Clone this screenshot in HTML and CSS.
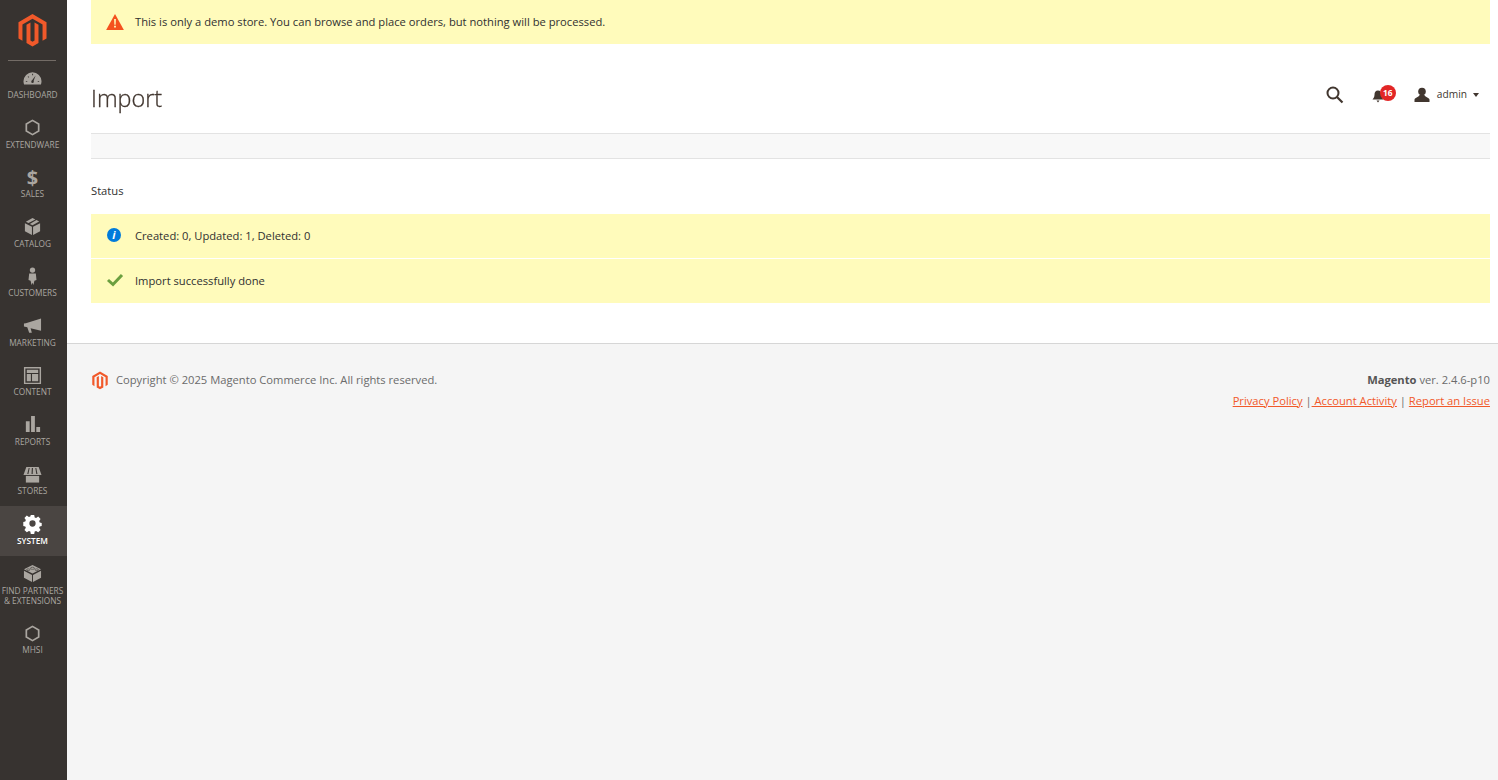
FILE: index.html
```html
<!DOCTYPE html>
<html lang="en">
<head>
<meta charset="utf-8">
<title>Import</title>
<link rel="stylesheet" href="styles.css">
</head>
<body>
<div class="app">
  <aside class="sidebar">
    <div class="logo-wrap">
      <svg class="logo" viewBox="0 0 30 34"><path class="brand" d="M15 0 29.500 8.400V25.200L25.400 27.600V10.800L15 4.800 4.600 10.800V27.600L.5 25.200V8.400Z"/><path class="brand" d="M12.900 8.600V27.400L15 28.600 17.100 27.400V8.600L21.200 11V29.900L15 33.500 8.800 29.900V11Z"/></svg>
    </div>
    <nav class="nav">
      <a class="nav-item">
        <svg class="nav-icon" viewBox="0 0 20 20"><path d="M10 3.500a9.500 9.500 0 0 0-9.500 9.500c0 1.100.2 2.200.6 3.200h17.800c.4-1 .6-2.100.6-3.200a9.500 9.500 0 0 0-9.500-9.500Z"/><path class="cut" d="M10.800 13.500 13.300 6.800 9 12.500Z"/><circle class="cut" cx="10" cy="13.500" r="1.300"/><path class="cut" d="M3 12.500h1.500v1H3ZM15.500 12.500H17v1h-1.500ZM5.500 7.500l1 1-.6.6-1-1ZM9.600 5h1V6.500h-1Z"/></svg>
        <span>Dashboard</span>
      </a>
      <a class="nav-item">
        <svg class="nav-icon" viewBox="0 0 20 20"><path class="hex" d="M10 2.500 16.500 6.300V13.700L10 17.500 3.500 13.700V6.300Z"/></svg>
        <span>Extendware</span>
      </a>
      <a class="nav-item">
        <svg class="nav-icon" viewBox="0 0 20 20"><text class="dollar" x="10" y="17.500" text-anchor="middle">$</text></svg>
        <span>Sales</span>
      </a>
      <a class="nav-item">
        <svg class="nav-icon" viewBox="0 0 20 20"><path d="M2 6.500 9.400 10.300V19L2 15ZM18 6.500 10.600 10.300V19L18 15ZM10 1 13 2.500 5.800 6.300 3 4.900ZM14.200 3.200 17 4.800 10 8.800 7.200 7.300Z"/></svg>
        <span>Catalog</span>
      </a>
      <a class="nav-item">
        <svg class="nav-icon" viewBox="0 0 20 20"><circle cx="10" cy="3.200" r="2.800"/><path d="M6.500 6.800h7l.7 7-2.200.7-1 4.500-1-2.500-1 2.500-1-4.500-2.200-.7Z"/></svg>
        <span>Customers</span>
      </a>
      <a class="nav-item">
        <svg class="nav-icon" viewBox="0 0 20 20"><path d="M19 2.500v13L8 12.800 9.300 17.500H6.500L4.500 11.800 1 11V8l2-.5Z"/></svg>
        <span>Marketing</span>
      </a>
      <a class="nav-item">
        <svg class="nav-icon" viewBox="0 0 20 20"><path fill-rule="evenodd" d="M1 1h18v18H1ZM2.500 2.500v15h15v-15Z"/><path d="M4 4h12v3.300H4ZM4 8.500h4.300V16H4ZM9.500 8.500H16V16H9.500Z"/></svg>
        <span>Content</span>
      </a>
      <a class="nav-item">
        <svg class="nav-icon" viewBox="0 0 20 20"><path d="M3 6.500h4V18H3ZM8.500 1h4V18h-4ZM14 12.500h4V18h-4Z"/></svg>
        <span>Reports</span>
      </a>
      <a class="nav-item">
        <svg class="nav-icon" viewBox="0 0 20 20"><path fill-rule="evenodd" d="M3.500 2h13L19.500 10.500H.5ZM6 3.200 4.500 9.500h1.200L7 3.200ZM9.300 3.200 9 9.500h1.200L10.500 3.200ZM13 3.200l1 6.300h1.200L14 3.200Z"/><path d="M3 11.500h14V18.500H3Z"/></svg>
        <span>Stores</span>
      </a>
      <a class="nav-item active">
        <svg class="nav-icon" viewBox="0 0 20 20"><path fill-rule="evenodd" d="M8.200 1h3.600l.5 2.600 1.500.6 2.200-1.500 2.500 2.500-1.500 2.200.6 1.500 2.100.5v3.200l-2.100.5-.6 1.500 1.500 2.200-2.500 2.500-2.200-1.500-1.500.6-.5 2.600H8.200l-.5-2.600-1.500-.6-2.200 1.500-2.500-2.500 1.500-2.200-.6-1.500-2.100-.5V8.400l2.100-.5.6-1.500L1.500 4.200 4 1.700l2.200 1.500 1.500-.6ZM10 6.700a3.300 3.300 0 1 0 0 6.600 3.300 3.300 0 0 0 0-6.600Z"/></svg>
        <span>System</span>
      </a>
      <a class="nav-item tall">
        <svg class="nav-icon" viewBox="0 0 20 20"><path d="M10 1 19 5.500 10 10 1 5.500ZM1 7 9.500 11.500V19L1 14.500ZM19 7 10.500 11.500V19L19 14.500Z"/><ellipse class="cut-line" cx="10" cy="4.500" rx="2.200" ry="1.100"/><ellipse class="cut-line" cx="5.600" cy="6" rx="1.800" ry=".9"/><ellipse class="cut-line" cx="14.400" cy="6" rx="1.800" ry=".9"/></svg>
        <span>Find Partners<br>&amp; Extensions</span>
      </a>
      <a class="nav-item">
        <svg class="nav-icon" viewBox="0 0 20 20"><path class="hex" d="M10 2.500 16.500 6.300V13.700L10 17.500 3.500 13.700V6.300Z"/></svg>
        <span>MHSI</span>
      </a>
    </nav>
  </aside>
  <div class="page">
    <main class="main">
      <div class="notice demo">
        <svg class="msg-icon" viewBox="0 0 20 18"><path class="brand-warn" d="M10 0 20 18H0Z"/><path fill="#fffbbb" d="M9 5.500h2L10.700 12H9.300ZM9 13.200h2V15.200H9Z"/></svg>
        <span>This is only a demo store. You can browse and place orders, but nothing will be processed.</span>
      </div>
      <header class="page-head">
        <h1>Import</h1>
        <div class="tools">
          <svg class="search" viewBox="0 0 18 18"><circle cx="7" cy="7" r="5.500" fill="none" stroke="#41362f" stroke-width="2"/><path d="M11 11l5.500 5.500" stroke="#41362f" stroke-width="2.200" fill="none"/></svg>
          <div class="bell">
            <svg viewBox="0 0 14 14"><path fill="#41362f" d="M7 1.500c-2.500 0-3.500 1.800-3.500 4.300 0 2.500-1 3.500-2 4.700h11c-1-1.200-2-2.200-2-4.700C10.500 3.300 9.500 1.500 7 1.500ZM5.500 11.500h3L7 13.500Z"/></svg>
            <span class="badge">16</span>
          </div>
          <div class="user">
            <svg viewBox="0 0 16 16"><circle cx="8" cy="4.500" r="3.800" fill="#41362f"/><path fill="#41362f" d="M5.500 8c-.3 2-4.500 2.500-5 4.500V15h15v-2.500C15 10.500 10.800 10 10.500 8Z"/></svg>
            <span class="user-name">admin</span>
            <span class="caret"></span>
          </div>
        </div>
      </header>
      <div class="actions-bar"></div>
      <div class="status">Status</div>
      <div class="messages">
        <div class="notice">
          <svg class="msg-icon" viewBox="1 0 16 16"><circle cx="8" cy="8" r="7" fill="#007bdb"/><text class="info-i" x="8" y="12" text-anchor="middle">i</text></svg>
          <span>Created: 0, Updated: 1, Deleted: 0</span>
        </div>
        <div class="notice">
          <svg class="msg-icon" viewBox="0 0 18 14"><path fill="none" stroke="#6b9f3f" stroke-width="3" d="M2 7l5 4.500L16 2"/></svg>
          <span>Import successfully done</span>
        </div>
      </div>
    </main>
    <footer class="footer">
      <div class="copy">
        <svg class="foot-logo" viewBox="0 0 30 34"><path class="brand" d="M15 0 29.500 8.400V25.200L25.400 27.600V10.800L15 4.800 4.600 10.800V27.600L.5 25.200V8.400Z"/><path class="brand" d="M12.900 8.600V27.400L15 28.600 17.100 27.400V8.600L21.200 11V29.900L15 33.500 8.800 29.900V11Z"/></svg>
        <span>Copyright © 2025 Magento Commerce Inc. All rights reserved.</span>
      </div>
      <div class="legal">
        <div class="version"><strong>Magento</strong> ver. 2.4.6-p10</div>
        <div class="links"><a>Privacy Policy</a> |<a>&nbsp;Account Activity</a> | <a>Report an Issue</a></div>
      </div>
    </footer>
  </div>
</div>
</body>
</html>
```
FILE: styles.css
```css
html, body { margin: 0; height: 100%; }
body { font-family: "Open Sans", sans-serif; font-size: 11.2px; color: #303030; background: #f5f5f5; }
.app { display: flex; min-height: 780px; }
.sidebar { width: 67px; flex: none; background: #373330; }
.brand { fill: #f1592a; }
.brand-warn { fill: #f4511e; }
.logo-wrap { height: 60.500px; margin: 0 11px 0 8px; border-bottom: 1px solid #736c66; display: flex; justify-content: center; box-sizing: border-box; padding-top: 14px; }
.logo { width: 29px; height: 33px; }
.nav { display: flex; flex-direction: column; }
.nav-item { height: 49.500px; display: flex; flex-direction: column; align-items: center; box-sizing: border-box; padding: 8px 2px 0 0; color: #aaa6a0; font-size: 8.300px; line-height: 10px; text-transform: uppercase; text-align: center; white-space: nowrap; }
.nav-item.tall { height: 60px; padding-top: 8.500px; }
.nav-item.active { background: #4a4542; color: #fff; font-weight: 600; }
.nav-icon { width: 19px; height: 19px; fill: #aaa6a0; margin-bottom: 2.500px; overflow: visible; }
.active .nav-icon { fill: #fff; }
.nav-icon .cut { fill: #373330; }
.nav-icon .cut-line { fill: none; stroke: #373330; stroke-width: .6; }
.nav-icon .hex { fill: none; stroke: #aaa6a0; stroke-width: 1.800; }
.dollar { font-size: 21px; font-weight: 700; font-family: "Open Sans", sans-serif; }
.info-i { font-size: 11px; font-weight: 700; font-style: italic; fill: #fff; font-family: "Open Sans", sans-serif; }
.page { flex: 1; display: flex; flex-direction: column; min-width: 0; }
.main { background: #fff; padding: 0 8px 40px 24px; }
.notice { height: 44px; background: #fffbbb; display: flex; align-items: center; padding-left: 15px; gap: 11px; box-sizing: border-box; }
.messages .notice { padding-bottom: 2px; }
.msg-icon { width: 18px; height: 16px; flex: none; }
.demo { height: 43.500px; }
.page-head { height: 89.500px; display: flex; justify-content: space-between; align-items: center; box-sizing: border-box; padding: 20px 11px 0 0; }
h1 { font-size: 23.400px; font-weight: 300; color: #41362f; margin: 0; will-change: opacity; -webkit-text-stroke: .3px #41362f; }
.tools { display: flex; align-items: center; transform: translateY(-3px); }
.search { width: 18px; height: 18px; }
.bell { margin-left: 27px; position: relative; width: 26px; height: 20px; }
.bell svg { width: 14px; height: 14px; position: absolute; left: 0; top: 4px; }
.badge { position: absolute; left: 9px; top: 0; width: 16px; height: 16px; border-radius: 50%; background: #e22626; color: #fff; font-size: 8.300px; font-weight: 700; line-height: 16px; text-align: center; }
.user { display: flex; align-items: center; margin-left: 17px; }
.user svg { width: 16px; height: 16px; }
.user-name { margin: 0 0 2px 7px; color: #41362f; font-size: 10.200px; }
.caret { margin-left: 6px; border: 3px solid transparent; border-top: 4px solid #41362f; border-bottom: 0; }
.actions-bar { height: 26px; background: #f8f8f8; border-top: 1px solid #e3e3e3; border-bottom: 1px solid #e3e3e3; box-sizing: border-box; }
.status { height: 55px; padding-top: 7px; box-sizing: border-box; display: flex; align-items: center; color: #303030; }
.messages { display: flex; flex-direction: column; gap: 1px; }
.footer { border-top: 1px solid #d6d6d6; flex: 1; padding: 26px 8px 0 24px; display: flex; justify-content: space-between; color: #6b6b6b; }
.copy { display: flex; align-items: flex-start; gap: 8px; }
.foot-logo { width: 16px; height: 19px; margin: 1px 0 0 1px; }
.copy span { line-height: 20px; }
.legal { text-align: right; line-height: 20.500px; }
.version strong { color: #555; }
.links a { color: #f1592a; text-decoration: underline; }
```
